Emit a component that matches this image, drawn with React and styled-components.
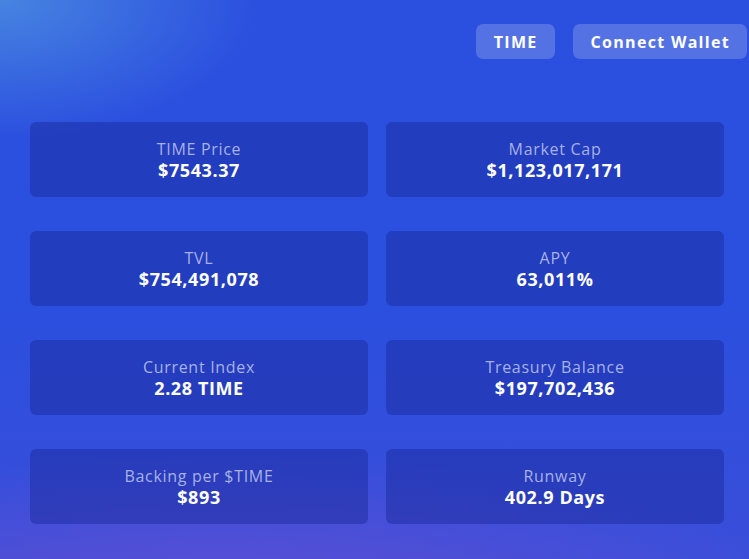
import styled, { createGlobalStyle } from "styled-components";

const GlobalStyle = createGlobalStyle`
  html, body {
    margin: 0;
    padding: 0;
    height: 100%;
  }
  body {
    font-family: "Open Sans", "Noto Sans", sans-serif;
    background: #2a4fdd;
    overflow: hidden;
  }
`;

const stats = [
  { label: "TIME Price", value: "$7543.37" },
  { label: "Market Cap", value: "$1,123,017,171" },
  { label: "TVL", value: "$754,491,078" },
  { label: "APY", value: "63,011%" },
  { label: "Current Index", value: "2.28 TIME" },
  { label: "Treasury Balance", value: "$197,702,436" },
  { label: "Backing per $TIME", value: "$893" },
  { label: "Runway", value: "402.9 Days" },
];

const App = () => {
  return (
    <Page>
      <GlobalStyle />
      <Header>
        <HeaderButton>TIME</HeaderButton>
        <HeaderButton>Connect Wallet</HeaderButton>
      </Header>
      <Grid>
        {stats.map((s) => (
          <Card key={s.label}>
            <Label>{s.label}</Label>
            <Value>{s.value}</Value>
          </Card>
        ))}
      </Grid>
    </Page>
  );
};

const Page = styled.div`
  width: 749px;
  height: 559px;
  box-sizing: border-box;
  padding: 24px 2px 0 30px;
  background:
    radial-gradient(ellipse 260px 140px at 0% 0%, rgba(80, 150, 225, 0.75), rgba(80, 150, 225, 0) 100%),
    radial-gradient(ellipse 600px 160px at 30% 110%, rgba(110, 80, 210, 0.75), rgba(110, 80, 210, 0) 100%),
    linear-gradient(180deg, #2b4fdf 0%, #2b4fdf 55%, #3a4ed9 100%);
`;

const Header = styled.div`
  display: flex;
  justify-content: flex-end;
  gap: 18px;
`;

const HeaderButton = styled.button`
  height: 35px;
  padding: 0 17px 0 18px;
  border: none;
  border-radius: 7px;
  background: rgba(255, 255, 255, 0.2);
  color: #fff;
  font-family: "Open Sans", sans-serif;
  font-weight: 700;
  font-size: 16px;
  letter-spacing: 1.3px;
  cursor: pointer;
`;

const Grid = styled.div`
  display: grid;
  grid-template-columns: 338px 338px;
  column-gap: 18px;
  row-gap: 34px;
  margin-top: 63px;
`;

const Card = styled.div`
  height: 75px;
  border-radius: 6px;
  background: rgba(24, 40, 150, 0.45);
  display: flex;
  flex-direction: column;
  align-items: center;
  justify-content: center;
  padding-top: 1px;
  box-sizing: border-box;
`;

const Label = styled.div`
  color: #a7b1e6;
  font-size: 16px;
  line-height: 20px;
  letter-spacing: 0.7px;
`;

const Value = styled.div`
  color: #fff;
  font-size: 18px;
  font-weight: 700;
  line-height: 22px;
  letter-spacing: 0.6px;
`;

export default App;
